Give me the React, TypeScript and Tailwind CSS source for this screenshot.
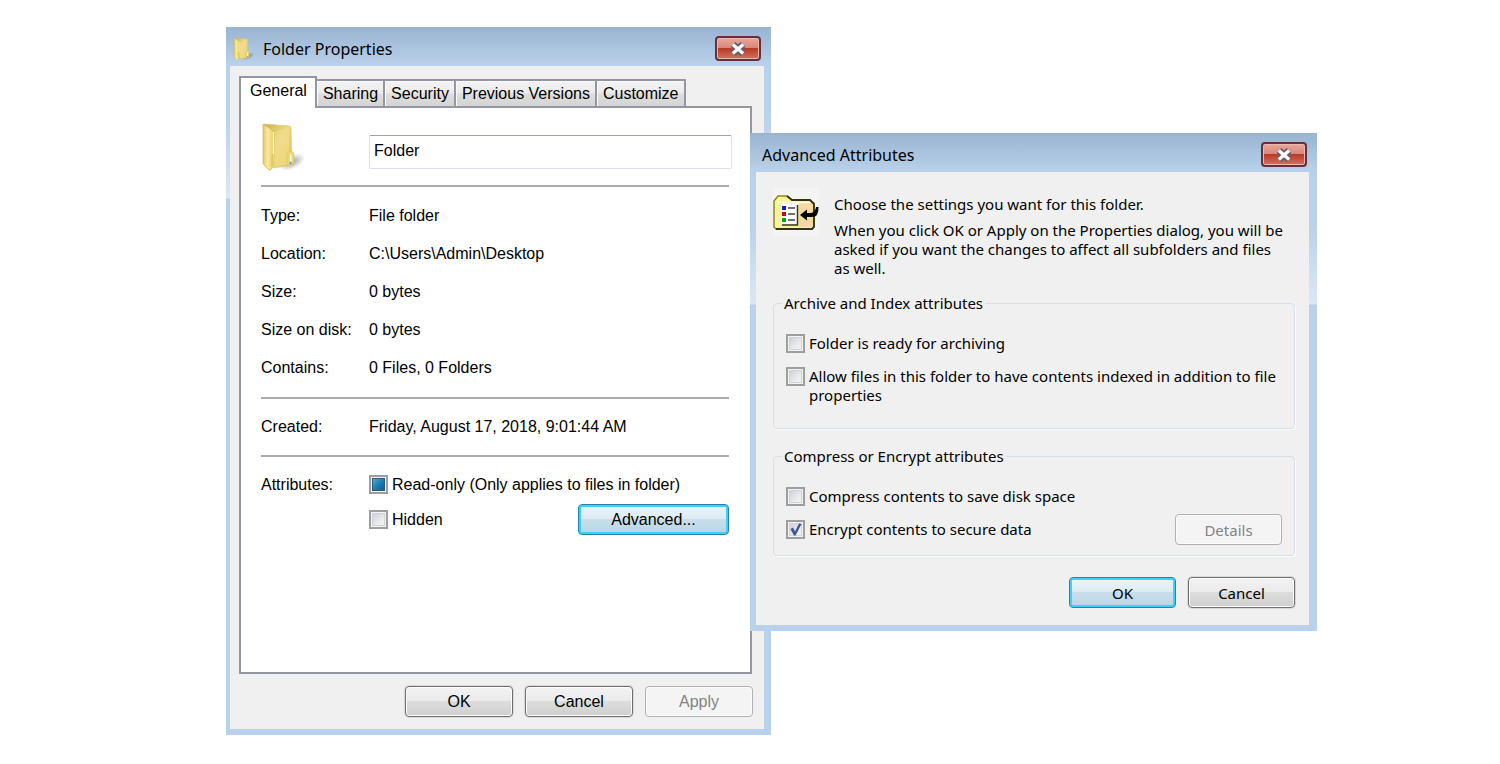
import { useState } from "react";
import type { ReactNode } from "react";
import clsx from "clsx";

const tabs = ["General", "Sharing", "Security", "Previous Versions", "Customize"];

const details = [
  { label: "Type:", value: "File folder" },
  { label: "Location:", value: "C:\\Users\\Admin\\Desktop" },
  { label: "Size:", value: "0 bytes" },
  { label: "Size on disk:", value: "0 bytes" },
  { label: "Contains:", value: "0 Files, 0 Folders" },
];

function FolderIcon({ id, className }: { id: string; className?: string }) {
  return (
    <svg viewBox="0 0 45 50" className={className} aria-hidden="true">
      <defs>
        <linearGradient id={`${id}-front`} x1="0" y1="0" x2="1" y2="0">
          <stop offset="0" stopColor="#e3c85f" />
          <stop offset="0.4" stopColor="#f8e99c" />
          <stop offset="1" stopColor="#e9d065" />
        </linearGradient>
        <linearGradient id={`${id}-back`} x1="0" y1="0" x2="1" y2="1">
          <stop offset="0" stopColor="#cdb04c" />
          <stop offset="0.45" stopColor="#ecd781" />
          <stop offset="1" stopColor="#e3c452" />
        </linearGradient>
        <radialGradient id={`${id}-shadow`}>
          <stop offset="0" stopColor="#555" stopOpacity="0.55" />
          <stop offset="1" stopColor="#555" stopOpacity="0" />
        </radialGradient>
      </defs>
      <ellipse cx="31" cy="40" rx="14" ry="7" fill={`url(#${id}-shadow)`} transform="rotate(-25 31 40)" />
      <path d="M3 2 L28 4 Q30 4 30 6 L31 43 L12 46 Z" fill={`url(#${id}-back)`} stroke="#dcc56c" strokeWidth="0.6" />
      <path d="M14 10 L28 5 L28 42 L14 45 Z" fill="#f3e193" opacity="0.55" />
      <path d="M2 2 L11 8 Q13 9 13 11 L13 32 L11 33 L11 46 Q10 49 8 48 L3 43 Q2 42 2 40 Z" fill={`url(#${id}-front)`} stroke="#d2b654" strokeWidth="0.7" />
      <path d="M12.500 10 V32" stroke="#fffbe0" strokeWidth="1.200" />
      <path d="M26 33 Q26 29 30 29 Q33 30 33 33 L33 41 L26 44 Z" fill="#efd770" stroke="#d9bd5a" strokeWidth="0.6" />
      <path d="M29 33 L30.500 32 L30.500 39 L29 40 Z" fill="#fffef2" />
      <circle cx="29.500" cy="41" r="1.200" fill="#5fa5b5" />
    </svg>
  );
}

function AttributesIcon() {
  return (
    <svg viewBox="0 0 46 48" className="h-12 w-[46px] shrink-0 bg-[#f4f4f4]" aria-hidden="true">
      <path d="M1 13 L5 8 H14 L19 12 H37 L41 15 V39 L39 41 H3 L1 39 Z" fill="#f6f2a0" stroke="#8c8a10" strokeWidth="1.500" />
      <path d="M26 15 H40 V39 H26 Z" fill="#f5d9a0" />
      <path d="M4 14.500 H38" stroke="#fffde0" strokeWidth="1.500" />
      <path d="M14 8 L19 12 H37 L41 16 V39 L39 41 H3" fill="none" stroke="#333311" strokeWidth="1.800" />
      <rect x="8" y="16" width="16" height="20" fill="#fff" />
      <path d="M24.500 17 V37 H9" fill="none" stroke="#333" strokeWidth="1.500" />
      <rect x="9" y="18" width="4" height="4" fill="#1818d8" />
      <rect x="9" y="24" width="4" height="4" fill="#b80820" />
      <rect x="9" y="30" width="4" height="4" fill="#08a018" />
      <path d="M15 20 H22 M15 26 H22 M15 32 H22" stroke="#444" strokeWidth="1.500" />
      <path d="M27 27 L34 21.500 V25 H38 Q42.500 24 43 19 H45.500 Q46 29 39 29 H34 V32.500 Z" fill="#050505" />
    </svg>
  );
}

function CloseButton() {
  return (
    <button
      type="button"
      aria-label="Close"
      className="flex h-[25px] w-[46px] items-center justify-center rounded border-2 border-[#64303c] shadow-[inset_0_0_0_1px_#eeb8ae] [background-image:linear-gradient(#e8a89d_0%,#d98578_48%,#b93a25_50%,#cf7364_100%)]"
    >
      <svg viewBox="0 0 18 16" className="h-4 w-[18px]" aria-hidden="true">
        <path d="M4 3.500 L14 12.500 M14 3.500 L4 12.500" stroke="#5c5f6c" strokeWidth="6.500" />
        <path d="M3.800 3.400 L14.200 12.600 M14.200 3.400 L3.800 12.600" stroke="#f8f8f8" strokeWidth="3.400" />
      </svg>
    </button>
  );
}

interface WindowProps {
  title: string;
  icon?: ReactNode;
  className?: string;
  children: ReactNode;
}

function Window({ title, icon, className, children }: WindowProps) {
  return (
    <section
      aria-label={title}
      className={clsx(
        "flex flex-col bg-[#b9d1ea] pb-[6px] [background-image:linear-gradient(#99b4d1_0px,#b9d1ea_38px,#b9d1ea_90px,#dbe8f5_171px,#b9d1ea_172px)]",
        className
      )}
    >
      <header className="flex h-[39px] items-center justify-between pt-1 pr-[10px]">
        <h2 className="flex items-center gap-2 font-['Noto_Sans','Open_Sans',sans-serif] text-base leading-5">
          {icon}
          {title}
        </h2>
        <CloseButton />
      </header>
      {children}
    </section>
  );
}

interface DialogButtonProps {
  children: ReactNode;
  primary?: boolean;
  disabled?: boolean;
  className?: string;
}

function DialogButton({ children, primary, disabled, className }: DialogButtonProps) {
  return (
    <button
      type="button"
      disabled={disabled}
      className={clsx(
        "h-[31px] rounded border leading-5",
        disabled && "border-[#adb2b5] bg-[#f4f4f4] text-[#838383] shadow-[inset_0_0_0_1px_#fcfcfc]",
        primary &&
          "border-[#2b7fae] shadow-[inset_0_0_0_2px_#3fd0f8] [background-image:linear-gradient(#edf5fa_0%,#dcebf3_48%,#c8dfeb_50%,#b8d5e6_100%)]",
        !primary &&
          !disabled &&
          "border-[#707070] shadow-[inset_0_0_0_1px_#fcfcfc,0_0_0_1px_#d8d8d8] [background-image:linear-gradient(#f2f2f2_0%,#ebebeb_48%,#dddddd_50%,#cfcfcf_100%)]",
        className
      )}
    >
      {children}
    </button>
  );
}

interface CheckProps {
  label: string;
  defaultChecked?: boolean;
  mixed?: boolean;
}

function Check({ label, defaultChecked, mixed }: CheckProps) {
  const [checked, setChecked] = useState(Boolean(defaultChecked));
  const [partial, setPartial] = useState(Boolean(mixed));

  return (
    <label className="flex items-start gap-1">
      <span className="relative size-[19px] shrink-0">
        <input
          type="checkbox"
          checked={checked}
          ref={(el) => {
            if (el) el.indeterminate = partial;
          }}
          onChange={(e) => {
            setPartial(false);
            setChecked(e.target.checked);
          }}
          className={clsx(
            "block size-[19px] appearance-none border-2 border-[#9d9e9e]",
            partial
              ? "shadow-[inset_0_0_0_1px_#f4f4f4,inset_0_0_0_2px_#2a5a80] [background-image:linear-gradient(135deg,#5fc0e0,#1e7db0_50%,#14508a)]"
              : "shadow-[inset_0_0_0_1px_#f4f4f4,inset_0_0_0_2px_#cfd3d8] [background-image:linear-gradient(135deg,#c4c9d0,#ebebed_60%,#f8f8f8)]"
          )}
        />
        {checked && !partial && (
          <svg viewBox="0 0 19 19" className="pointer-events-none absolute inset-0 size-[19px]" aria-hidden="true">
            <path d="M4.500 9 L7 7.500 L9 11.500 L13 3.500 L15.500 4 L9.500 15.500 L8 15.500 Z" fill="#3f5596" />
          </svg>
        )}
      </span>
      <span>{label}</span>
    </label>
  );
}

function Divider() {
  return <hr className="border-0 border-t-2 border-[#ababab]" />;
}

function FolderProperties() {
  const [active, setActive] = useState("General");

  return (
    <Window
      title="Folder Properties"
      icon={<FolderIcon id="small" className="ml-[7px] h-6 w-[22px]" />}
      className="w-[545px]"
    >
      <div className="mr-[7px] ml-1 flex flex-col bg-[#f0f0f0] pt-[10px] pr-3 pb-3 pl-[9px] font-['Liberation_Sans',Arial,sans-serif] text-base">
        <div role="tablist" className="flex items-end">
          {tabs.map((tab) => (
            <button
              key={tab}
              type="button"
              role="tab"
              aria-selected={tab === active}
              onClick={() => setActive(tab)}
              className={clsx(
                "border-t-2 border-r-2 border-[#9496a1] leading-5",
                tab === active
                  ? "relative z-10 -mb-[2px] h-8 border-l-2 bg-white pr-2 pb-1 pl-[9px]"
                  : "h-[27px] pr-[5px] pl-[6px] shadow-[inset_1px_1px_0_#fafafa] [background-image:linear-gradient(#f3f3f3_0%,#ebebeb_48%,#dedede_52%,#d4d4d4_100%)]"
              )}
            >
              {tab}
            </button>
          ))}
        </div>

        <div
          role="tabpanel"
          aria-label={active}
          className="min-h-[568px] border-2 border-[#9496a1] bg-white pt-4 pr-[21px] pl-5 leading-5"
        >
          <div className="mb-[13px] flex h-12 items-end">
            <div className="w-[108px] shrink-0">
              <FolderIcon id="large" className="h-[50px] w-[45px]" />
            </div>
            <input
              type="text"
              aria-label="Folder name"
              defaultValue="Folder"
              className="-mr-[3px] mb-[3px] h-[34px] min-w-0 grow rounded-xs border border-[#dbe0ea] border-t-[#a0a2ac] bg-white px-1 pb-[3px]"
            />
          </div>
          <Divider />

          <dl className="grid grid-cols-[108px_1fr] py-[10px]">
            {details.map((row) => (
              <div key={row.label} className="col-span-2 grid h-[38px] grid-cols-subgrid items-center">
                <dt>{row.label}</dt>
                <dd>{row.value}</dd>
              </div>
            ))}
          </dl>
          <Divider />

          <dl className="grid h-14 grid-cols-[108px_1fr] items-center">
            <dt>Created:</dt>
            <dd>Friday, August 17, 2018, 9:01:44 AM</dd>
          </dl>
          <Divider />

          <div className="flex pt-[18px]">
            <p className="w-[108px] shrink-0">Attributes:</p>
            <div className="grow">
              <Check label="Read-only (Only applies to files in folder)" mixed />
              <div className="mt-[9px] flex items-center justify-between">
                <Check label="Hidden" />
                <DialogButton primary className="w-[151px]">
                  Advanced...
                </DialogButton>
              </div>
            </div>
          </div>
        </div>

        <div className="mt-3 -mr-px flex justify-end gap-3">
          <DialogButton className="w-[108px]">OK</DialogButton>
          <DialogButton className="w-[108px]">Cancel</DialogButton>
          <DialogButton className="w-[108px]" disabled>
            Apply
          </DialogButton>
        </div>
      </div>
    </Window>
  );
}

function Group({ title, className, children }: { title: string; className?: string; children: ReactNode }) {
  return (
    <fieldset className={clsx("rounded border border-[#d5dfe5] px-2 shadow-[1px_1px_0_#fcfcfc]", className)}>
      <legend className="px-[2px]">{title}</legend>
      {children}
    </fieldset>
  );
}

function AdvancedAttributes() {
  return (
    <Window title="Advanced Attributes" className="relative mt-[106px] -ml-[21px] w-[567px] pl-3">
      <div className="mr-2 -ml-[6px] flex flex-col bg-[#f0f0f0] pt-4 pr-[14px] pb-[17px] pl-[17px] font-['Noto_Sans','Open_Sans',sans-serif] text-[15px] leading-[19px]">
        <div className="flex gap-[15px] pr-2">
          <AttributesIcon />
          <div className="flex flex-col gap-[7px] pt-[7px]">
            <p>Choose the settings you want for this folder.</p>
            <p>
              When you click OK or Apply on the Properties dialog, you will be asked if you want the changes to affect
              all subfolders and files as well.
            </p>
          </div>
        </div>

        <Group title="Archive and Index attributes" className="mt-4 pb-[23px]">
          <div className="flex flex-col gap-[14px] pt-[21px] pl-1">
            <Check label="Folder is ready for archiving" />
            <Check label="Allow files in this folder to have contents indexed in addition to file properties" />
          </div>
        </Group>

        <Group title="Compress or Encrypt attributes" className="mt-[18px] pb-[10px]">
          <div className="flex flex-col pt-[21px] pl-1">
            <Check label="Compress contents to save disk space" />
            <div className="mt-2 flex items-center justify-between pr-1">
              <Check label="Encrypt contents to secure data" defaultChecked />
              <DialogButton className="w-[107px]" disabled>
                Details
              </DialogButton>
            </div>
          </div>
        </Group>

        <div className="mt-[21px] flex justify-end gap-3">
          <DialogButton className="w-[107px]" primary>
            OK
          </DialogButton>
          <DialogButton className="w-[107px]">Cancel</DialogButton>
        </div>
      </div>
    </Window>
  );
}

export default function App() {
  return (
    <main className="flex min-h-screen items-start justify-center bg-white pt-[27px] pl-[43px] text-black">
      <FolderProperties />
      <AdvancedAttributes />
    </main>
  );
}
